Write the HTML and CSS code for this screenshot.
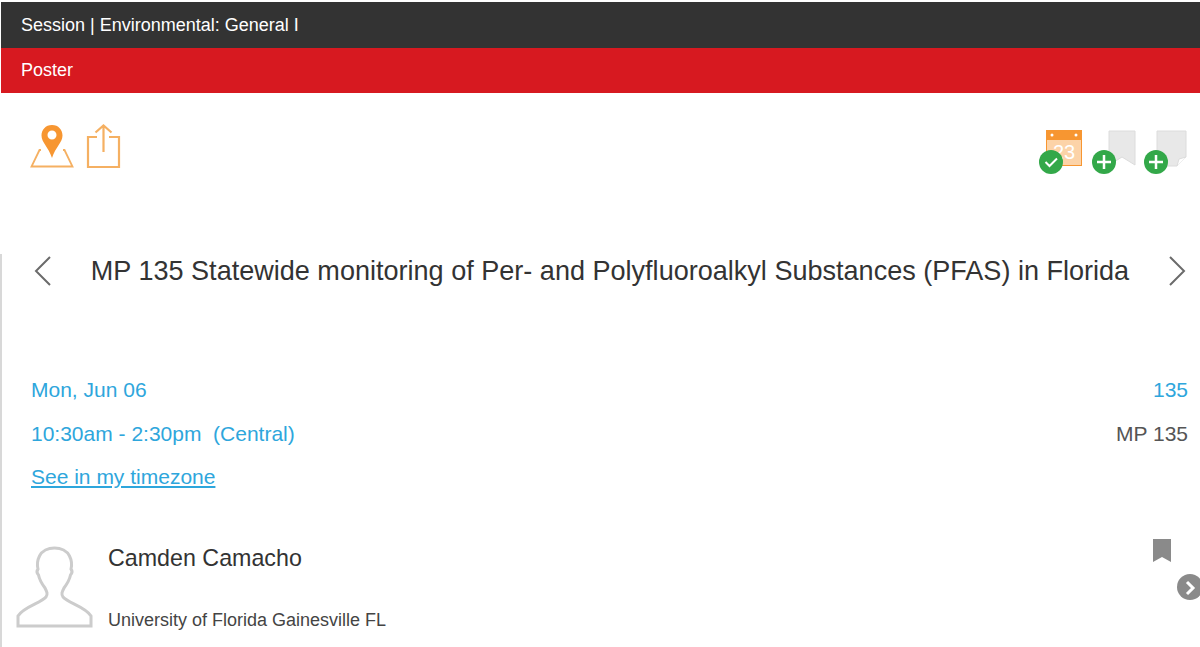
FILE: index.html
```html
<!DOCTYPE html>
<html lang="en">
<head>
  <meta charset="UTF-8">
  <meta name="viewport" content="width=device-width, initial-scale=1.0">
  <title>Session Detail</title>
  <link rel="stylesheet" href="styles.css">
</head>
<body>

  <header class="session-bar">Session | Environmental: General I</header>
  <div class="type-bar">Poster</div>

  <div class="detail">
    <div class="actions">
      <div class="actions-left">
        <svg width="46" height="46" viewBox="0 0 46 46">
          <path d="M11 26 L9.500 26 L1.500 42.500 L42.500 42.500 L34.500 26 L33 26" fill="none" stroke="#f5b062" stroke-width="1.800"/>
          <path fill-rule="evenodd" d="M22 1 C15.500 1 11.500 6 11.500 11.500 C11.500 18.500 18.500 23 22 34 C25.500 23 32.500 18.500 32.500 11.500 C32.500 6 28.500 1 22 1 Z M22 6.500 A4.500 4.500 0 1 1 22 15.500 A4.500 4.500 0 1 1 22 6.500 Z" fill="#f79631"/>
        </svg>
        <svg width="36" height="46" viewBox="0 0 36 46">
          <path d="M11 13 L2 13 L2 43 L33 43 L33 13 L23 13" fill="none" stroke="#f5b062" stroke-width="2.200"/>
          <path d="M17.500 28 L17.500 1.500 M9.500 8.500 L17.500 1.500 L25.500 8.500" fill="none" stroke="#f5b062" stroke-width="2.200"/>
        </svg>
      </div>
      <div class="actions-right">
        <svg width="46" height="46" viewBox="0 0 46 46">
          <rect x="7" y="0" width="36" height="36" fill="#fcd3a8"/>
          <rect x="7" y="0" width="36" height="10" fill="#f79631"/>
          <rect x="7.500" y="0.500" width="35" height="35" fill="none" stroke="#f79631"/>
          <circle cx="13" cy="5" r="1.500" fill="#fff"/>
          <circle cx="37" cy="5" r="1.500" fill="#fff"/>
          <text x="25" y="29" class="cal-day">23</text>
          <circle cx="12" cy="32" r="12" fill="#33a849"/>
          <path d="M6.500 32 L10.500 36 L18 28.500" fill="none" stroke="#fff" stroke-width="2"/>
        </svg>
        <svg width="45" height="46" viewBox="0 0 45 46">
          <path d="M17 1 L43 1 L43 35 L30 27 L17 35 Z" fill="#e8e8e8" stroke="#dcdcdc"/>
          <circle cx="12" cy="32" r="12" fill="#33a849"/>
          <path d="M12 25 L12 39 M5 32 L19 32" stroke="#fff" stroke-width="2.500"/>
        </svg>
        <svg width="44" height="46" viewBox="0 0 44 46">
          <path d="M13 1 L42 1 L42 27 L33 36 L13 36 Z" fill="#e8e8e8" stroke="#dcdcdc"/>
          <path d="M42 27 L35 29 L33 36" fill="#fff" stroke="#dcdcdc"/>
          <circle cx="12" cy="32" r="12" fill="#33a849"/>
          <path d="M12 25 L12 39 M5 32 L19 32" stroke="#fff" stroke-width="2.500"/>
        </svg>
      </div>
    </div>

    <div class="lower">
      <div class="title-row">
        <svg width="18" height="30" viewBox="0 0 18 30"><path d="M16 1 L2 15 L16 29" fill="none" stroke="#6b6b6b" stroke-width="2"/></svg>
        <h1>MP 135 Statewide monitoring of Per- and Polyfluoroalkyl Substances (PFAS) in Florida</h1>
        <svg width="18" height="30" viewBox="0 0 18 30"><path d="M2 1 L16 15 L2 29" fill="none" stroke="#6b6b6b" stroke-width="2"/></svg>
      </div>

      <div class="info">
        <div class="info-row">
          <span class="blue">Mon, Jun 06</span>
          <span class="blue">135</span>
        </div>
        <div class="info-row">
          <span class="blue">10:30am - 2:30pm&nbsp; (Central)</span>
          <span class="room">MP 135</span>
        </div>
        <div class="info-row">
          <a href="#" class="blue">See in my timezone</a>
        </div>
      </div>

      <div class="person">
        <svg width="78" height="82" viewBox="0 0 78 82">
          <path d="M39.500 2 C33 2 27 5 24.500 10 C22 15 22 19 23 23 C21.500 25 21.500 27 23.500 29 C24.500 34 27 38 30 42 C32 46 33 48 31 51 C26 57 8 61 3 70 L3 80 L76 80 L76 70 C71 61 53 57 48 51 C46 48 47 46 49 42 C52 38 54.500 34 55.500 29 C57.500 27 57.500 25 56 23 C57 19 57 15 54.500 10 C52 5 46 2 39.500 2 Z" fill="none" stroke="#cccccc" stroke-width="3"/>
        </svg>
        <div class="person-text">
          <div class="person-name">Camden Camacho</div>
          <div class="person-org">University of Florida Gainesville FL</div>
        </div>
        <div class="person-side">
          <svg class="bookmark" width="18" height="23" viewBox="0 0 18 23"><path d="M0 0 L18 0 L18 23 L9 18 L0 23 Z" fill="#8a8a8a"/></svg>
          <svg class="next" width="26" height="26" viewBox="0 0 26 26">
            <circle cx="13" cy="13" r="13" fill="#8a8a8a"/>
            <path d="M10 8 L16 14 L10 20" fill="none" stroke="#fff" stroke-width="3"/>
          </svg>
        </div>
      </div>
    </div>
  </div>

</body>
</html>
```

FILE: styles.css
```css
/* Reset default styles */
* {
  margin: 0;
  padding: 0;
  box-sizing: border-box;
}

body {
  display: flex;
  flex-direction: column;
  font-family: "Liberation Sans", Arial, sans-serif;
  color: #333;
  background: #fff;
  padding: 2px 0 0 1px;
  height: 647px;
  overflow: hidden;
}

/* Header Bars */
.session-bar {
  height: 46px;
  padding-left: 20px;
  font-size: 18px;
  line-height: 46px;
  color: #fff;
  background: #333;
}

.type-bar {
  height: 45px;
  padding-left: 20px;
  font-size: 18px;
  line-height: 44px;
  color: #fff;
  background: #d71920;
}

.detail {
  display: flex;
  flex: 1;
  flex-direction: column;
  padding-top: 30px;
}

/* Icon Row */
.actions {
  display: flex;
  justify-content: space-between;
  height: 131px;
  padding: 0 12px 0 29px;
}

.actions-left {
  display: flex;
  align-items: flex-start;
  gap: 10px;
  margin-top: 1px;
}

.actions-right {
  display: flex;
  align-items: flex-start;
  gap: 7px;
  padding-top: 7px;
}

.cal-day {
  font-family: "Liberation Sans", Arial, sans-serif;
  font-size: 20px;
  fill: #fff;
  text-anchor: middle;
}

/* Everything below the icons has a grey line on its left */
.lower {
  flex: 1;
  margin-left: -1px;
  border-left: 2px solid #d8d8d8;
}

/* Title Row */
.title-row {
  display: flex;
  align-items: center;
  justify-content: space-between;
  height: 34px;
  margin-bottom: 90px;
  padding: 0 14px 0 32px;
}

.title-row h1 {
  font-size: 27.05px;
  font-weight: normal;
  white-space: nowrap;
}

/* Date and Room */
.info {
  display: flex;
  flex-direction: column;
  gap: 20.5px;
  padding: 0 12px 0 29px;
  font-size: 21px;
  line-height: 23px;
}

.info-row {
  display: flex;
  justify-content: space-between;
}

.blue {
  color: #2ea6dc;
}

.room {
  color: #555;
}

/* Speaker */
.person {
  display: flex;
  margin-top: 58px;
  padding-left: 13px;
}

.person-text {
  flex: 1;
  padding-left: 15px;
}

.person-name {
  font-size: 23.25px;
  line-height: 24px;
}

.person-org {
  margin-top: 40px;
  font-size: 18px;
  line-height: 21px;
  color: #444;
}

.person-side {
  display: flex;
  flex-direction: column;
  width: 47px;
}

.bookmark {
  flex-shrink: 0;
  margin-top: -7px;
}

.next {
  flex-shrink: 0;
  margin: 12px 0 0 24px;
}
```
